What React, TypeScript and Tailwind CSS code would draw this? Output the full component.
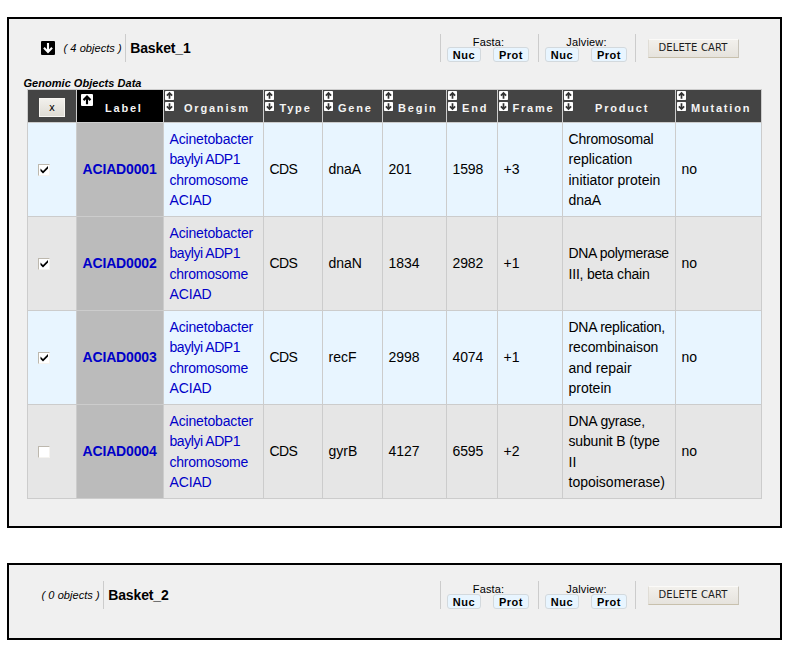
import React from "react";

type SortState = "both" | "asc";
type Line = { text: string; fit?: string };

const columns: { name: string; sort: SortState; align: string }[] = [
  { name: "Label", sort: "asc", align: "pl-[28px]" },
  { name: "Organism", sort: "both", align: "pl-[20px]" },
  { name: "Type", sort: "both", align: "pl-[15.5px]" },
  { name: "Gene", sort: "both", align: "pl-[15px]" },
  { name: "Begin", sort: "both", align: "pl-[15px]" },
  { name: "End", sort: "both", align: "pl-[15px]" },
  { name: "Frame", sort: "both", align: "pl-[14.5px]" },
  { name: "Product", sort: "both", align: "pl-[32px]" },
  { name: "Mutation", sort: "both", align: "pl-[15px]" },
];

const rows: { checked: boolean; label: string; gene: string; begin: string; end: string; frame: string; product: Line[] }[] = [
  {
    checked: true, label: "ACIAD0001", gene: "dnaA", begin: "201", end: "1598", frame: "+3",
    product: [{ text: "Chromosomal", fit: "tracking-[-0.2px]" }, { text: "replication" }, { text: "initiator protein" }, { text: "dnaA" }],
  },
  {
    checked: true, label: "ACIAD0002", gene: "dnaN", begin: "1834", end: "2982", frame: "+1",
    product: [{ text: "DNA polymerase", fit: "tracking-[-0.34px]" }, { text: "III, beta chain", fit: "tracking-[-0.2px]" }],
  },
  {
    checked: true, label: "ACIAD0003", gene: "recF", begin: "2998", end: "4074", frame: "+1",
    product: [{ text: "DNA replication,", fit: "tracking-[-0.25px]" }, { text: "recombinaison", fit: "tracking-[-0.1px]" }, { text: "and repair" }, { text: "protein" }],
  },
  {
    checked: false, label: "ACIAD0004", gene: "gyrB", begin: "4127", end: "6595", frame: "+2",
    product: [{ text: "DNA gyrase,", fit: "tracking-[-0.2px]" }, { text: "subunit B (type", fit: "tracking-[-0.15px]" }, { text: "II" }, { text: "topoisomerase)" }],
  },
];

const organism: Line[] = [
  { text: "Acinetobacter", fit: "tracking-[-0.16px]" },
  { text: "baylyi ADP1", fit: "tracking-[-0.45px]" },
  { text: "chromosome", fit: "tracking-[-0.25px]" },
  { text: "ACIAD", fit: "tracking-[-0.15px]" },
];

function Arrow({ size, down = false, color, bg, stroke = 1.9 }: { size: number; down?: boolean; color: string; bg: string; stroke?: number }) {
  return (
    <svg width={size} height={size} viewBox="0 0 10 10" className="block shrink-0">
      <rect width="10" height="10" rx="0.8" fill={bg} />
      <g transform={down ? "rotate(180 5 5)" : undefined} fill="none" stroke={color} strokeWidth={stroke}>
        <path d="M5 8.5V2.2M2.1 5.1L5 2.2L7.9 5.1" />
      </g>
    </svg>
  );
}

function Check({ checked }: { checked: boolean }) {
  return (
    <span className="block size-3 border border-t-[#bdb8ae] border-l-[#bdb8ae] border-r-[#f5f3ef] border-b-[#f5f3ef] bg-white">
      {checked && (
        <svg width="10" height="10" viewBox="0 0 10 10" className="block">
          <path d="M1.5 3.4V6L4 8.5L9 3.5V1L4 6Z" fill="#000" />
        </svg>
      )}
    </span>
  );
}

function Lines({ lines }: { lines: Line[] }) {
  return (
    <div>
      {lines.map((l) => (
        <div key={l.text} className={l.fit}>{l.text}</div>
      ))}
    </div>
  );
}

function Pill({ children, width }: { children: string; width: string }) {
  return (
    <span className={`flex h-[15px] ${width} items-center justify-center rounded-[3px] border border-[#d3d9dd] bg-[#e8f5ff] pt-px text-[11px] font-bold leading-none tracking-[0.5px]`}>
      {children}
    </span>
  );
}

function ExportGroup({ title, width }: { title: string; width: string }) {
  return (
    <div className={`flex h-7 ${width} flex-col border-l border-[#ccc] pl-[6px]`}>
      <div className="mt-[2px] h-[11px] w-[83px] text-center text-[11px] leading-[13px] tracking-[0.15px]">{title}</div>
      <div className="flex gap-3">
        <Pill width="w-[34px]">Nuc</Pill>
        <Pill width="w-[36px]">Prot</Pill>
      </div>
    </div>
  );
}

function BasketHeader({ name, count, open = false }: { name: string; count: number; open?: boolean }) {
  return (
    <div className="flex h-7 items-center">
      <div className="flex w-[399px] items-center whitespace-nowrap">
        {open && (
          <div className="mr-[8px]">
            <Arrow size={14} down color="#fff" bg="#000" stroke={1.5} />
          </div>
        )}
        <div className="pl-[0.5px] text-[11px] italic tracking-[0.06px]">( {count} objects )</div>
        <div className="ml-[3px] flex h-7 items-center border-l border-[#ccc] pl-[4.5px] text-[14px] font-bold tracking-[-0.15px]">{name}</div>
      </div>
      <ExportGroup title="Fasta:" width="w-[98px]" />
      <ExportGroup title="Jalview:" width="w-[97px]" />
      <div className="flex h-7 items-center border-l border-[#ccc] pl-[12px]">
        <button className="h-[19px] w-[91px] whitespace-nowrap border border-t-[#fbfaf8] border-l-[#e0ddd6] border-r-[#c8c4ba] border-b-[#c8c0ac] bg-gradient-to-b from-[#f2f0ec] to-[#e6e3dd] pr-px font-['DejaVu_Sans',sans-serif] text-[10px] leading-none tracking-[0.14px] text-[#1c1c1c]">
          DELETE CART
        </button>
      </div>
    </div>
  );
}

function ObjectsTable() {
  return (
    <div className="grid w-[735px] grid-cols-[48px_86px_99px_58px_59px_63px_50px_64px_112px_85px] gap-px border border-[#ccc] bg-[#ccc] text-[14px] leading-[20.5px]">
      <div className="flex h-8 items-center justify-center bg-[#444]">
        <button className="mt-[3px] h-[19px] w-[26px] border border-[#f8f6f2] bg-gradient-to-b from-[#f2f0ec] to-[#dfdcd5] font-['DejaVu_Sans',sans-serif] text-[10px] leading-none">x</button>
      </div>
      {columns.map((c) => (
        <div key={c.name} className={`relative h-8 pt-[11px] ${c.align} ${c.sort === "asc" ? "bg-black" : "bg-[#444]"} text-[11px] font-bold leading-[14px] tracking-[1.8px] text-[#f4f4f4]`}>
          <div className={c.sort === "asc" ? "absolute left-1 top-1" : "absolute left-px top-px flex flex-col gap-[1.5px]"}>
            {c.sort === "asc" ? (
              <Arrow size={12} color="#000" bg="#fff" stroke={1.8} />
            ) : (
              <>
                <Arrow size={9} color="#333" bg="#fff" />
                <Arrow size={9} down color="#333" bg="#fff" />
              </>
            )}
          </div>
          {c.name}
        </div>
      ))}
      {rows.map((r, i) => {
        const cell = `flex h-[93px] items-center whitespace-nowrap pl-[5.5px] ${i % 2 === 0 ? "bg-[#e8f5ff]" : "bg-[#e6e6e6]"}`;
        return (
          <React.Fragment key={r.label}>
            <div className={cell}>
              <div className="ml-[4.5px]"><Check checked={r.checked} /></div>
            </div>
            <div className="flex items-center bg-[#bbb] pl-[5.5px] font-bold tracking-[-0.15px] text-[#0000c8]">{r.label}</div>
            <div className={`${cell} text-[#0000c8]`}><Lines lines={organism} /></div>
            <div className={`${cell} tracking-[-0.6px]`}>CDS</div>
            <div className={cell}>{r.gene}</div>
            <div className={cell}>{r.begin}</div>
            <div className={`${cell} tracking-[-0.15px]`}>{r.end}</div>
            <div className={cell}>{r.frame}</div>
            <div className={cell}><Lines lines={r.product} /></div>
            <div className={cell}>no</div>
          </React.Fragment>
        );
      })}
    </div>
  );
}

export default function App() {
  return (
    <main className="h-[659px] w-[800px] bg-white pl-[7px] pt-[17px] font-['Liberation_Sans',Arial,sans-serif] text-black">
      <section className="h-[511px] w-[775px] border-2 border-black bg-[#f0f0f0]">
        <div className="pl-[32px] pt-[15px]"><BasketHeader name="Basket_1" count={4} open /></div>
        <h2 className="ml-[14.5px] mt-[14px] h-[13px] text-[11px] font-bold italic leading-[15px] tracking-[0.03px]">Genomic Objects Data</h2>
        <div className="ml-[18px]"><ObjectsTable /></div>
      </section>
      <section className="mt-[35px] h-[77px] w-[775px] border-2 border-black bg-[#f0f0f0]">
        <div className="pl-[32px] pt-[16px]"><BasketHeader name="Basket_2" count={0} /></div>
      </section>
    </main>
  );
}
